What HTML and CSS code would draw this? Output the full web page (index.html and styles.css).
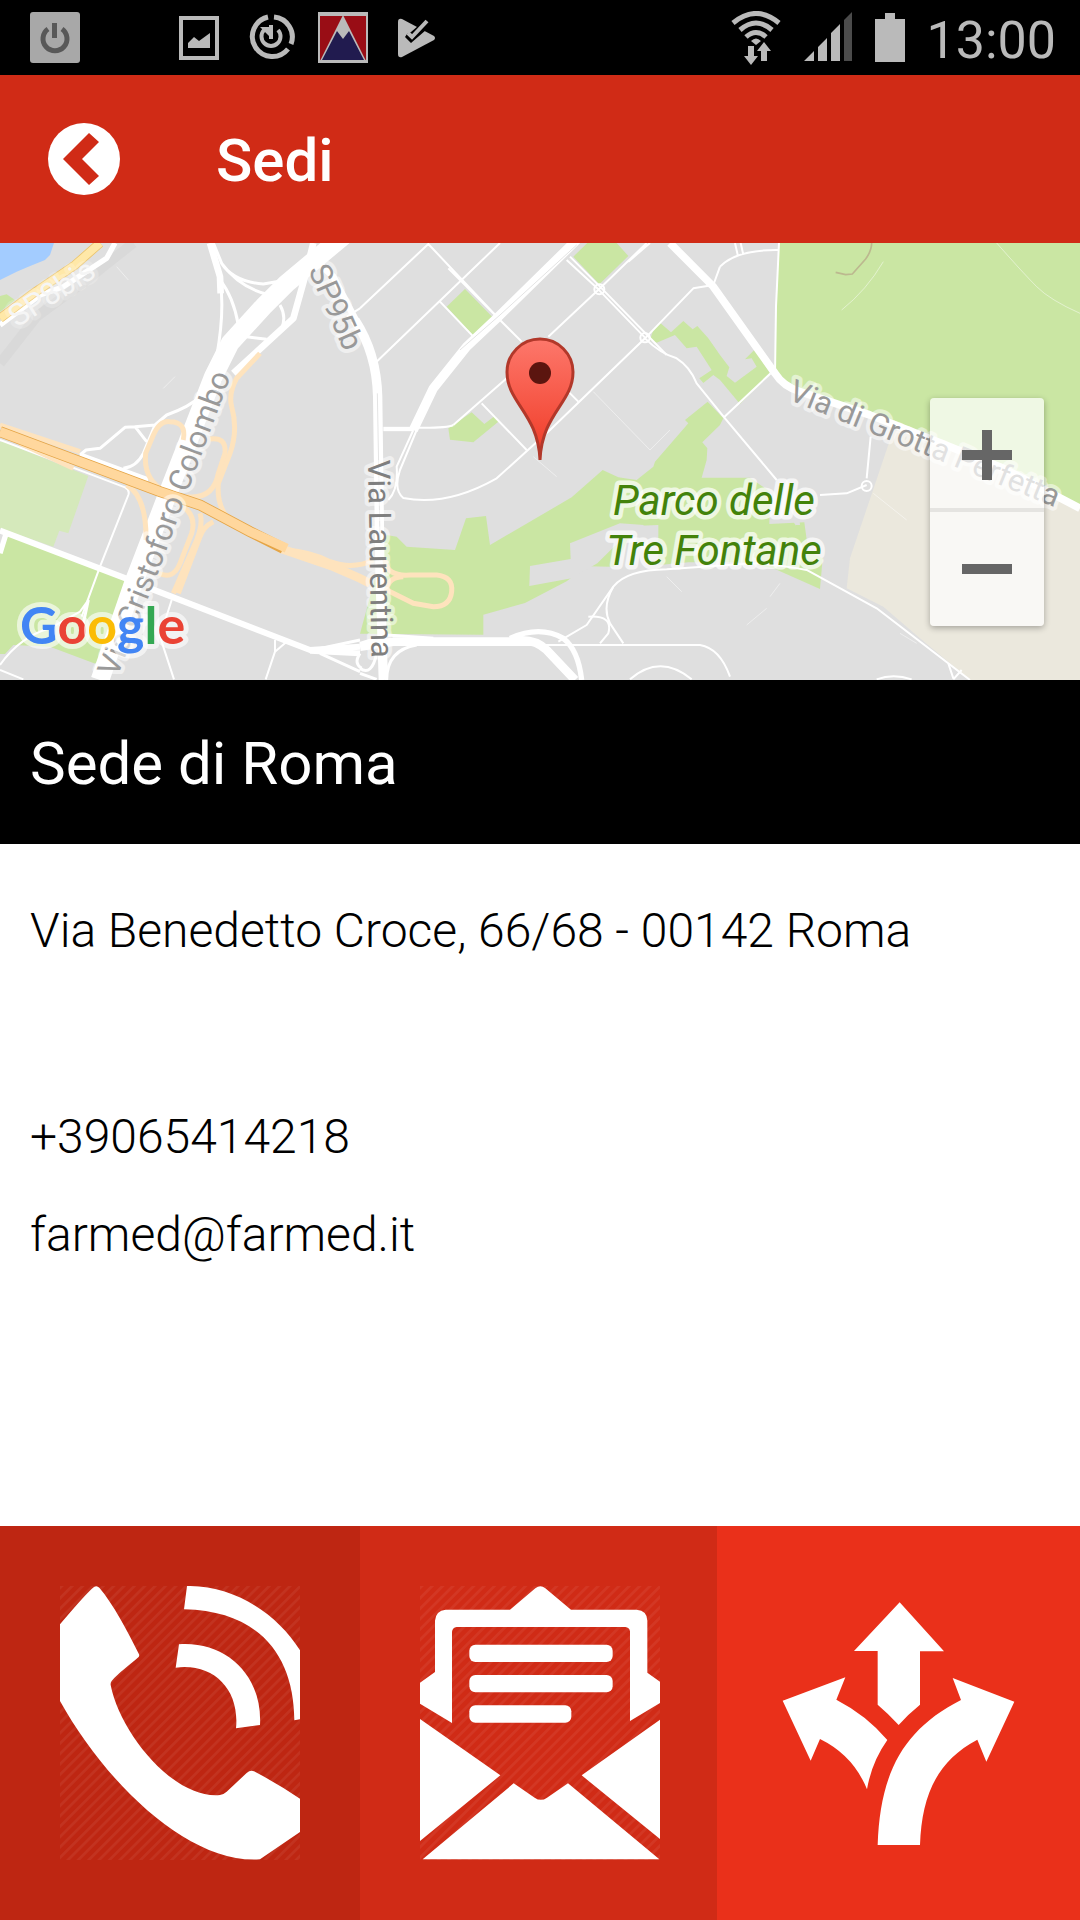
FILE: index.html
```html
<!DOCTYPE html>
<html lang="it">
  <head>
    <meta charset="UTF-8" />
    <meta name="viewport" content="width=device-width, initial-scale=1.0" />
    <title>Sedi</title>
    <link rel="stylesheet" href="styles.css">
  </head>
  <body>
    <div class="status-bar">
      <div class="status-icons">
        <svg width="50" height="51" viewBox="0 0 50 51">
          <rect width="50" height="51" rx="3" fill="#a8a8a8"/>
          <path d="M18 17a12 12 0 1 0 14 0" fill="none" stroke="#585858" stroke-width="5"/>
          <rect x="22" y="11" width="5" height="15" fill="#585858"/>
        </svg>
        <span class="status-slot"></span>
        <svg width="50" height="51" viewBox="0 0 50 51">
          <rect x="7" y="6" width="36" height="40" fill="none" stroke="#bababa" stroke-width="4"/>
          <path d="M14 36v-5l6-6 5 4 11-8v15z" fill="#bababa"/>
        </svg>
        <svg width="50" height="51" viewBox="0 0 50 51">
          <g fill="none" stroke="#bababa">
            <path d="M22 5a20 20 0 1 0 20 32M28 5a20 20 0 0 1 17 27" stroke-width="5"/>
            <path d="M18 18a9.500 9.500 0 1 0 14 0M25 13v14" stroke-width="4"/>
          </g>
          <path d="M14 15h10v10z" fill="#bababa"/>
        </svg>
        <svg width="50" height="51" viewBox="0 0 50 51">
          <rect width="50" height="51" fill="#bababa"/>
          <rect x="2" y="4" width="46" height="44" fill="#990d15"/>
          <path d="M2 49L25 3l23 46z" fill="#bababa"/>
          <path d="M4 48l15-29 6 8 6-8 15 29z" fill="#211b4f"/>
        </svg>
        <svg width="50" height="51" viewBox="0 0 50 51">
          <path d="M8 10q0-4 4-3l32 17q2 2 0 4L12 45q-4 1-4-3z" fill="#bababa"/>
          <path d="M28 14l-7 6-4 2-2 3 6 6 15-13 8-8-4-10z" fill="#000"/>
          <path d="M18 21l4 4L37 9" fill="none" stroke="#bababa" stroke-width="4"/>
        </svg>
      </div>
      <div class="status-icons">
        <svg width="50" height="54" viewBox="0 0 50 54">
          <g fill="none" stroke="#bababa" stroke-width="5">
            <path d="M2 12q23-19 46 0"/>
            <path d="M9 19q16-14 32 0"/>
            <path d="M15 26q10-9 20 0"/>
          </g>
          <path d="M20 30q5-5 10 0l-5 4zM17 35h6v10h4l-7 9-7-9h4zM30 50h6V40h4l-7-9-7 9h4z" fill="#bababa"/>
        </svg>
        <svg width="50" height="51" viewBox="0 0 50 51">
          <path d="M1 49h10V39zM15 49h9V26l-9 9zM28 49h9V12l-9 9z" fill="#bababa"/>
          <path d="M41 49h8V0l-8 8z" fill="#4b4b4b"/>
        </svg>
        <svg width="30" height="49" viewBox="0 0 30 49">
          <path d="M0 6h10V0h10v6h10v43H0z" fill="#bababa"/>
        </svg>
        <span class="clock">13:00</span>
      </div>
    </div>

    <header class="header">
      <button class="back-btn" type="button" aria-label="Indietro">
        <svg width="72" height="72" viewBox="0 0 72 72">
          <circle cx="36" cy="36" r="36" fill="#fff"/>
          <path d="M41 10l10 9-17 17 17 17-10 9-26-26z" fill="#d02b16"/>
        </svg>
      </button>
      <h1>Sedi</h1>
    </header>

    <div class="map">
      <svg class="map-canvas" viewBox="0 0 1080 437">
        <g transform="scale(.33333) translate(0 -9)">
          <!-- water and parks -->
          <path class="water" d="M0 9H162L150 45 135 60 85 80 50 95 0 120z"/>
          <path class="park-light" d="M10 605L265 708 205 880 178 872 160 920 0 865V605z"/>
          <g class="park">
            <path d="M0 168l20-5 25 17L0 215z"/>
            <path d="M20 880L385 1022 340 1140 288 1272 150 1220 40 1215 15 1242H0V940z"/>
            <path d="M1720 50L1762 9h88l35 39-87 85z"/>
            <path d="M1340 200l55-53 83 85-58 55z"/>
            <path d="M1950 300l10-30 20-22 33 29 37-34 28 25 14-10 33 37 35 50 28 37-8 26 25 20 65-48-15-25-20 3 30-30 45 72-90 92-60-72-20-15-30 24-12-14 37-25-45-70-30 5-35-40-55 23z"/>
            <path d="M1345 565l70-48 38 35 32-25 10 18-75 62-70-8z"/>
            <path d="M1160 885l30 5 30 30 145 10 33-95 60-7 12 87 245-143 93-82 47 22 55 8 50-40 5-15 100-115-10-10 68-55 47 50-10 20-53 52 15 18-2 35-15 53h145l60 42-2 97 105-5 12 88 43 20-8 92-140-62-90-18-165 0-160 15-145-3-20 15-40 30-125 65-125 35v60l-370-3z"/>
            <path d="M2337 9H3240V800L3010 690 2800 600 2610 535 2370 445 2322 400z"/>
          </g>
          <path d="M1710 910l150-60 72 5-90 65-50 50-77 45-127 23 2-60 122-21zM1900 858l75-3v128h-135l30-55z" fill="#dfdfdf"/>
          <path d="M2330 770l60-20 10 105h-12v2z" fill="#dfdfdf"/>
          <path d="M2680 570L2800 600 3010 690 3240 800V1320H2910L2760 1195 2650 1100 2540 1045 2550 955z" fill="#ebe8dd"/>

          <!-- railway -->
          <path d="M0 370L110 230 260 120 400 9" fill="none" stroke="#d9d9d9" stroke-width="30"/>

          <!-- thin streets -->
          <g class="road" stroke-width="6">
            <path d="M0 600L375 742Q390 750 385 765L300 980 245 1130M0 1290L70 1318M0 1275Q60 1190 150 1165L240 1115 265 1080"/>
            <path d="M515 1080L480 1190 522 1318M825 1200V1235L797 1318M825 1235L860 1205"/>
            <path d="M1080 205L1285 12 1500 240 1565 305M1345 85L1495 235M1500 9L1125 370M1320 185L1420 290M1445 490L1580 630M1360 555L1520 415M1040 230L1080 205"/>
            <path d="M1700 60L1795 148 1935 293M1710 50L1800 140 2000 345M1940 9L1800 145 1645 290M1950 9L1885 65"/>
            <path d="M1935 295L1650 570 1490 715Q1340 800 1210 774Q1180 750 1200 690L1250 570M1240 570L1190 680Q1195 750 1165 780"/>
            <path d="M1935 295L2080 145 2140 135 2160 80M1935 295Q1980 340 2030 355Q2070 380 2090 430L2175 535 2330 720"/>
            <path d="M2160 80Q2210 28 2337 30M2205 9l8 35M2222 9l8 35M2172 532l140-132M2337 9L2328 200 2325 400M2612 590L2600 715"/>
            <path d="M2460 765L2540 760 2600 735"/>
            <circle cx="2600" cy="738" r="15"/>
            <circle cx="1798" cy="148" r="15"/>
            <circle cx="1935" cy="293" r="14"/>
            <path d="M1080 1215H2100Q2160 1225 2190 1310M1890 1318Q1980 1240 2075 1318M2630 1318Q2680 1300 2735 1318M1675 1205L1760 1155 1840 1040Q1880 990 2000 988L2260 970Q2350 975 2420 990L2630 1105 2910 1320"/>
            <path d="M1840 1040Q1805 1100 1830 1150L1870 1210M1765 1130Q1840 1125 1825 1180L1800 1210M2845 1270l15 45M2885 1290l-25 28"/>
            <path d="M1705 455L1735 485"/>
          </g>
          <g class="road" stroke-width="2" opacity=".7">
            <path d="M350 80l35 40M490 445l35-35M1780 455L1950 630 2010 570M1600 650l70 60M2000 1010l45 45M2240 1155l60-50M2340 1030l-30 40M2990 9Q3070 100 3110 140T3240 220M2525 210Q2600 150 2650 65M2620 760L2720 840M2700 1180l50 30"/>
          </g>
          <path d="M2507 97l30 7 20-2 40-45q18-25 18-48" fill="none" stroke="#bcb88f" stroke-width="5"/>

          <!-- main roads -->
          <g class="road">
            <path stroke-width="16" d="M0 255L120 165 190 140 320 55 345 9"/>
            <path stroke-width="9" d="M640 9L665 70Q700 125 790 132L860 120M665 70Q720 145 810 165M660 120Q700 170 715 255M660 120Q675 210 650 350M840 195Q860 230 845 265M740 290L800 298M600 470Q570 500 500 525L465 555 405 560 440 605M465 555L430 640Q410 680 370 685M405 560L375 562 300 625 258 630 240 645M265 1080L250 1150M850 120L940 60"/>
            <path stroke-width="20" d="M630 9L660 110 662 160M940 9L915 110 880 235 700 400"/>
            <path stroke-width="18" d="M0 872L385 1018M450 1045L930 1230 1080 1220M930 1232L1080 1240"/>
            <path stroke-width="9" d="M940 1230L1080 1200M960 1240L1080 1295M1080 1240Q1060 1270 1085 1285"/>
            <path stroke-width="16" d="M20 875L0 940M240 645L445 720"/>
            <path stroke-width="56" d="M300 1320L400 1030 500 770 640 410 690 310 790 200 860 130 1040 -20"/>
            <path stroke-width="28" d="M1065 240Q1130 340 1133 470L1140 1000 1150 1320"/>
            <path stroke-width="20" d="M935 50L1000 110 1070 245"/>
            <path stroke-width="28" d="M1240 570L1300 445 1400 320 1490 235 1740 -10"/>
            <path stroke="#e4e4e4" stroke-width="3" d="M1380 330L1500 225 1730 15M1132 460L1140 900"/>
            <path stroke-width="13" d="M1150 567H1240"/>
            <path stroke-width="6" d="M1240 563Q1340 565 1360 555"/>
            <path stroke-width="23" d="M2010 9L2140 140 2325 400Q2350 440 2400 455L2610 525 2800 600 3010 685 3240 805"/>
            <path stroke-width="26" d="M1080 1220L1180 1205H1530Q1600 1190 1640 1230L1725 1320"/>
            <path stroke-width="16" d="M1530 1195Q1620 1155 1690 1195Q1735 1230 1745 1320"/>
            <path stroke-width="9" d="M1080 1210L1160 1185 1300 1195M1080 1285Q1115 1310 1130 1240M1250 1215Q1160 1230 1160 1320M1080 1300L1130 1318"/>
          </g>

          <!-- motorway and its ramps -->
          <g fill="none" stroke="#fee3bd" stroke-width="15">
            <path d="M0 555L240 635M60 610L220 685M380 735Q440 770 438 900M780 340L710 415Q685 460 695 500Q715 570 690 640L655 730Q650 790 680 830"/>
            <path d="M550 600Q560 545 510 545Q480 540 460 585L437 640Q430 710 480 745M560 770Q640 780 655 700L675 640Q680 590 630 597"/>
            <path d="M550 800Q590 830 575 880L540 970Q520 1020 475 1000M600 820Q610 850 590 900L520 1060M640 845Q610 860 600 890L535 1060"/>
            <path d="M860 930Q930 935 990 965Q1060 990 1120 960M1155 960Q1160 1010 1230 1005H1310Q1360 1010 1355 1055Q1350 1100 1300 1100L1240 1090 1160 1050Q1165 1010 1210 1010"/>
            <path stroke-width="26" d="M840 925L1000 980 1080 1015 1110 1030"/>
          </g>
          <path d="M0 575L480 755 600 795 750 875 850 925" fill="none" stroke="#e5a546" stroke-width="33"/>
          <path d="M0 575L480 755 600 795 750 875 860 925" fill="none" stroke="#ffd79d" stroke-width="28"/>
          <path d="M0 235L100 160 225 75 300 9" fill="none" stroke="#ebc46c" stroke-width="28"/>
          <path d="M0 235L100 160 225 75 300 9" fill="none" stroke="#ffe8a8" stroke-width="23"/>
        </g>

        <path id="colombo" d="M117 435L160 325 188 248 235 122" fill="none"/>
        <g class="street-name">
          <text class="route" transform="translate(17 85) rotate(-33)">SP8bis</text>
          <text class="dim" transform="translate(308 27) rotate(66)">SP95b</text>
          <text class="dim"><textPath href="#colombo">Via Cristoforo Colombo</textPath></text>
          <text transform="translate(368 217) rotate(89)">Via Laurentina</text>
          <text class="dim" transform="translate(787 156) rotate(22)">Via di Grotta Perfetta</text>
        </g>
        <g class="park-name">
          <text x="714" y="272">Parco delle</text>
          <text x="714" y="322">Tre Fontane</text>
        </g>

        <text class="google" x="20" y="401"><tspan fill="#4285f4">G</tspan><tspan fill="#ea4335">o</tspan><tspan fill="#fbbc05">o</tspan><tspan fill="#4285f4">g</tspan><tspan fill="#34a853">l</tspan><tspan fill="#ea4335">e</tspan></text>

        <!-- marker -->
        <linearGradient id="pin" x1="0" y1="0" x2="0" y2="1">
          <stop offset="0" stop-color="#fd776b"/>
          <stop offset="1" stop-color="#f03a25"/>
        </linearGradient>
        <path d="M540 217C538 170 507 160 507 129A33 33 0 0 1 573 129C573 160 542 170 540 217z" fill="url(#pin)" stroke="#b2382a" stroke-width="3"/>
        <circle cx="540" cy="130" r="11" fill="#5b150f"/>
      </svg>

      <div class="zoom-control">
        <button class="zoom-btn" type="button" aria-label="Ingrandisci">
          <svg width="50" height="50" viewBox="0 0 50 50"><path d="M20 0h10v20h20v10H30v20H20V30H0V20h20z" fill="#666"/></svg>
        </button>
        <button class="zoom-btn" type="button" aria-label="Riduci">
          <svg width="50" height="50" viewBox="0 0 50 50"><path d="M0 20h50v10H0z" fill="#666"/></svg>
        </button>
      </div>
    </div>

    <h2 class="place-name">Sede di Roma</h2>

    <main class="details">
      <p class="address">Via Benedetto Croce, 66/68 - 00142 Roma</p>
      <p><a href="tel:+39065414218">+39065414218</a></p>
      <p><a href="mailto:farmed@farmed.it">farmed@farmed.it</a></p>
    </main>

    <nav class="actions">
      <a class="action action-call" href="tel:+39065414218" aria-label="Chiama">
        <svg width="240" height="274" viewBox="0 0 720 822">
          <defs>
            <pattern id="stripes" width="22" height="22" patternUnits="userSpaceOnUse" patternTransform="rotate(45)">
              <rect width="8" height="22" fill="#fff" opacity=".06"/>
            </pattern>
          </defs>
          <rect width="720" height="822" fill="url(#stripes)"/>
          <g fill="#fff">
            <path d="M0 115Q80 20 102 3Q110-3 118 5C160 55 200 130 237 205Q239 210 235 214C205 240 175 262 155 285Q151 290 152 297C180 440 340 640 480 627Q490 626 500 617L560 561Q572 550 582 556Q660 597 720 638V738L600 820C380 835 130 580 0 345z"/>
            <path d="M381 0C520-2 650 80 720 193V400L703 403C702 210 600 75 372 70z"/>
            <path d="M357 175C500 165 608 270 600 417L528 427C540 310 460 230 347 245z"/>
          </g>
        </svg>
      </a>
      <a class="action action-mail" href="mailto:farmed@farmed.it" aria-label="Scrivi">
        <svg width="240" height="274" viewBox="0 0 720 822">
          <rect width="720" height="822" fill="url(#stripes)"/>
          <path fill="#fff" fill-rule="evenodd" d="M270 71L346 7Q361-6 376 7L453 71H650Q682 74 682 104V260L720 287V351L630 405V136Q628 124 616 123H110Q97 124 96 138V411L0 353V290L45 258V104Q47 74 77 71z"/>
          <g fill="#fff">
            <rect x="148" y="176" width="430" height="52" rx="18"/>
            <rect x="148" y="267" width="430" height="52" rx="18"/>
            <rect x="148" y="358" width="306" height="52" rx="18"/>
            <path d="M0 399L241 568 0 765zM720 401L485 568 720 759zM8 820L281 592 344 635Q363 648 381 635L444 592 718 820z"/>
          </g>
        </svg>
      </a>
      <a class="action action-route" href="https://maps.google.com/" aria-label="Indicazioni">
        <svg width="240" height="274" viewBox="0 0 720 822">
          <g fill="#fff">
            <path d="M359 49L492 196H420V356Q385 384 356 417Q325 383 293 356V195H222z"/>
            <path d="M8 344L196 274 169 341Q260 388 322 462Q275 528 261 610Q220 508 120 459L92 524z"/>
            <path d="M518 276L703 347 619 527 592 461C470 525 425 630 420 777H293C300 560 370 430 543 342z"/>
          </g>
        </svg>
      </a>
    </nav>
  </body>
</html>
```
FILE: styles.css
```css
* {
  box-sizing: border-box;
}
body {
  display: flex;
  flex-direction: column;
  min-height: 100vh;
  margin: 0;
  font-family: Roboto, sans-serif;
  background: #fff;
  color: #000;
}
h1,
h2,
p {
  margin: 0;
}
svg {
  display: block;
}
button {
  padding: 0;
  border: none;
  background: none;
  cursor: pointer;
}
a {
  color: inherit;
  text-decoration: none;
}
.status-bar {
  display: flex;
  justify-content: space-between;
  height: 75px;
  padding: 0 24px 0 30px;
  background: #000;
}
.status-icons {
  display: flex;
  align-items: center;
  gap: 22px;
}
.status-slot {
  width: 50px;
}
.clock {
  padding-top: 6px;
  font-size: 52px;
  line-height: 64px;
  color: #bababa;
}
.header {
  display: flex;
  align-items: center;
  gap: 96px;
  height: 168px;
  padding: 0 48px;
  background: #d02b16;
  color: #fff;
}
.header h1 {
  padding-top: 4px;
  font-size: 60px;
  line-height: 70px;
  font-weight: 500;
}
.map {
  position: relative;
  background: #dfdfdf;
  overflow: hidden;
}
.map-canvas {
  width: 100%;
  height: auto;
}
.water {
  fill: #a3ccff;
}
.park {
  fill: #cae6a3;
}
.park-light {
  fill: #d5e9bb;
}
.road {
  fill: none;
  stroke: #fff;
  stroke-linejoin: round;
}
.street-name {
  font-size: 31px;
  fill: #7f7f7f;
  stroke: rgba(255, 255, 255, 0.5);
  stroke-width: 8px;
  stroke-linejoin: round;
  paint-order: stroke;
}
.street-name .route {
  fill: #f5f5f5;
  stroke: rgba(255, 255, 255, 0.2);
}
.street-name .dim {
  fill: #999;
}
.park-name {
  font-size: 42px;
  font-style: italic;
  text-anchor: middle;
  fill: #43820b;
  stroke: rgba(255, 255, 255, 0.7);
  stroke-width: 9px;
  stroke-linejoin: round;
  paint-order: stroke;
}
.google {
  font-family: Lato, sans-serif;
  font-size: 52px;
  font-weight: 700;
  stroke: rgba(255, 255, 255, 0.6);
  stroke-width: 10px;
  stroke-linejoin: round;
  paint-order: stroke;
}
.zoom-control {
  position: absolute;
  right: 36px;
  bottom: 54px;
  display: flex;
  flex-direction: column;
  width: 114px;
  border-radius: 4px;
  background: rgba(255, 255, 255, 0.7);
  box-shadow: 0 2px 6px rgba(0, 0, 0, 0.3);
}
.zoom-btn {
  display: flex;
  align-items: center;
  justify-content: center;
  height: 114px;
}
.zoom-btn + .zoom-btn {
  box-shadow: 0 -4px 0 rgba(0, 0, 0, 0.08);
}
.place-name {
  padding: 49px 30px 45px;
  font-size: 60px;
  line-height: 70px;
  font-weight: 400;
  background: #000;
  color: #fff;
}
.details {
  flex: 1;
  display: flex;
  flex-direction: column;
  gap: 42px;
  padding: 59px 30px;
  font-size: 48px;
  line-height: 56px;
  font-weight: 300;
}
.address {
  margin-bottom: 108px;
}
.actions {
  display: grid;
  grid-template-columns: repeat(3, 1fr);
}
.action {
  display: flex;
  justify-content: center;
  padding: 60px 0;
}
.action-call {
  background: #be2612;
}
.action-mail {
  background: #d02b16;
}
.action-route {
  background: #ea301a;
  box-shadow: -3px 0 0 #ea301a;
}
```
